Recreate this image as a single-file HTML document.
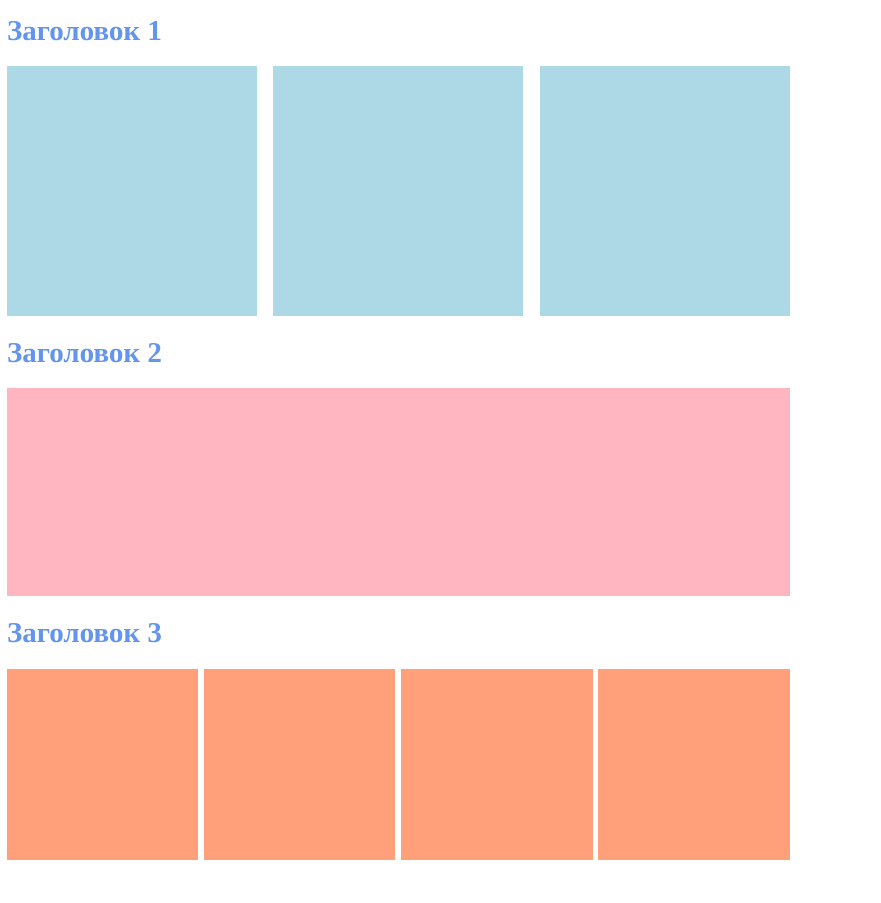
<!DOCTYPE html>
<html><head><meta charset="utf-8"><style>
body{margin:0;width:881px;height:903px;background:#fff;position:relative;overflow:hidden}
h2{position:absolute;left:7px;margin:0;font:bold 29px/34px "Liberation Serif",serif;color:#6495ED;white-space:nowrap}
.b{position:absolute}
.l{background:#ADD8E6;top:66px;height:250px;width:250px}
.o{background:#FFA07A;top:669px;height:191px}
</style></head><body>
<h2 style="top:14px">Заголовок 1</h2>
<div class="b l" style="left:7px"></div>
<div class="b l" style="left:273px"></div>
<div class="b l" style="left:540px"></div>
<h2 style="top:336px">Заголовок 2</h2>
<div class="b" style="left:7px;top:388px;width:783px;height:208px;background:#FFB6C1"></div>
<h2 style="top:616px">Заголовок 3</h2>
<div class="b o" style="left:7px;width:191px"></div>
<div class="b o" style="left:204px;width:191px"></div>
<div class="b o" style="left:401px;width:192px"></div>
<div class="b o" style="left:598px;width:192px"></div>
</body></html>
